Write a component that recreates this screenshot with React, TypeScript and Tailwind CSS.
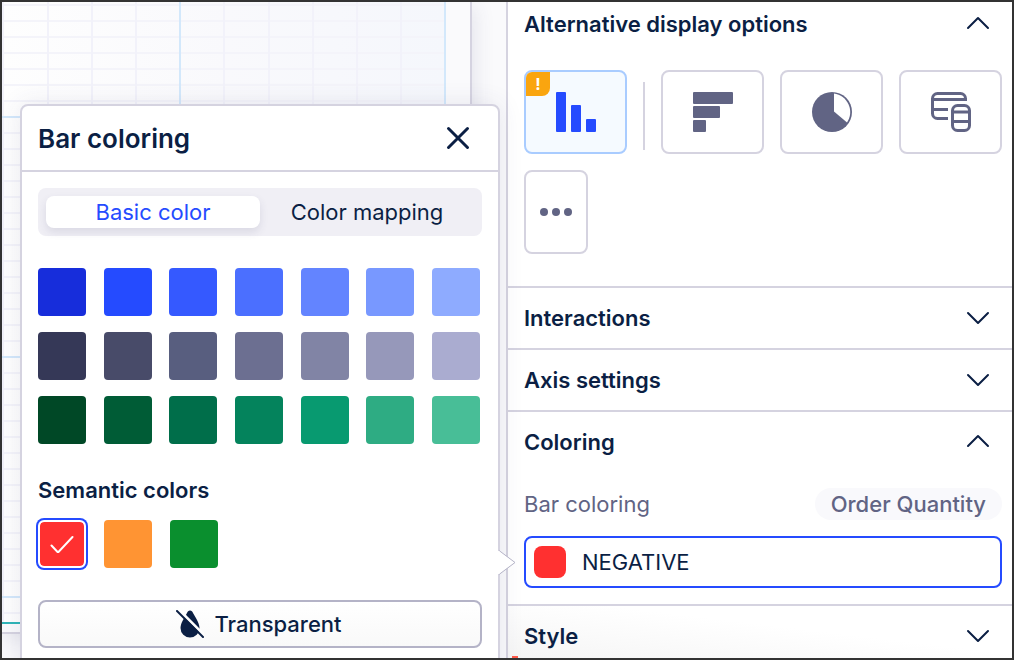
import React, { useState } from "react";

const palette = [
  ["#172ddb", "#254bff", "#3559ff", "#4b6fff", "#6384ff", "#7898ff", "#8eabff"],
  ["#353857", "#484b69", "#585e7f", "#6c6f91", "#8184a5", "#9698ba", "#aaacd0"],
  ["#004826", "#005c36", "#006e4a", "#04835c", "#089a70", "#2eac83", "#48be97"],
];

const semantic = [
  { name: "Negative", color: "#ff3030" },
  { name: "Critical", color: "#ff9433" },
  { name: "Positive", color: "#0a8f2e" },
];

const Chevron = ({ up = false }: { up?: boolean }) => (
  <svg width="24" height="24" viewBox="0 0 24 24" fill="none" stroke="#0b1f44" strokeWidth="2" strokeLinecap="round" strokeLinejoin="round">
    <path d={up ? "M2 16 12 6l10 10" : "M2 7l10 10L22 7"} />
  </svg>
);

const SectionHeader = ({ title, open = false }: { title: string; open?: boolean }) => (
  <h2>
    <button aria-expanded={open} className="flex h-[60px] w-full items-center justify-between pl-4 pr-[22px] text-[22px] font-semibold">
      {title}
      <Chevron up={open} />
    </button>
  </h2>
);

const cardClass = "flex h-[84px] items-center justify-center rounded-lg border-2";

const ChartOptions = () => (
  <div className="flex flex-wrap gap-4 pl-4 pr-2.5 pt-6 pb-8">
    <button aria-label="Bar chart" className={`${cardClass} relative min-w-[103px] flex-1 border-[#a9ccff] bg-[#f5faff]`}>
      <span className="absolute left-0 top-0 flex size-6 items-center justify-center rounded-br-lg rounded-tl-md bg-[#faa50f] text-base font-bold text-white">
        !
      </span>
      <svg width="40" height="40" viewBox="0 0 40 40" fill="#254bff">
        <rect width="10" height="40" rx="1" />
        <rect x="15" y="13" width="10" height="27" rx="1" />
        <rect x="30" y="27" width="10" height="13" rx="1" />
      </svg>
    </button>
    <div className="mb-1 mt-3 w-0.5 bg-[#d5d3e0]" />
    <button aria-label="Horizontal bar chart" className={`${cardClass} min-w-[103px] flex-1 border-[#d5d3e0]`}>
      <svg width="40" height="40" viewBox="0 0 40 40" fill="#616484">
        <rect width="40" height="12" rx="1" />
        <rect y="14" width="27" height="12" rx="1" />
        <rect y="28" width="13" height="12" rx="1" />
      </svg>
    </button>
    <button aria-label="Pie chart" className={`${cardClass} min-w-[103px] flex-1 border-[#d5d3e0]`}>
      <svg width="40" height="40" viewBox="0 0 40 40">
        <circle cx="20" cy="20" r="20" fill="#616484" />
        <path d="M22 1.6A18.6 18.6 0 0 1 35 30.5L22 19.4Z" fill="#fff" />
      </svg>
    </button>
    <button aria-label="Tables" className={`${cardClass} min-w-[103px] flex-1 border-[#d5d3e0]`}>
      <svg width="40" height="40" viewBox="0 0 40 40" fill="none" stroke="#616484" strokeWidth="3">
        <path d="M17 26.5H6.5a5 5 0 0 1-5-5v-15a5 5 0 0 1 5-5h23a5 5 0 0 1 5 5v1H1.5M1.5 17.5H17" />
        <rect x="21.5" y="13.5" width="17" height="25" rx="5" />
        <path d="M21.5 20h17M21.5 29.5h17" />
      </svg>
    </button>
    <button aria-label="More charts" className={`${cardClass} w-16 border-[#d5d3e0]`}>
      <svg width="32" height="8" viewBox="0 0 32 8" fill="#616484">
        <circle cx="4" cy="4" r="4" />
        <circle cx="16" cy="4" r="4" />
        <circle cx="28" cy="4" r="4" />
      </svg>
    </button>
  </div>
);

const SettingsPanel = () => (
  <aside className="w-[506px] shrink-0 border-l-2 border-[#d5d3e0] bg-white">
    <h2>
      <button aria-expanded="true" className="flex h-11 w-full items-center justify-between pl-4 pr-[22px] text-[22px] font-semibold">
        Alternative display options
        <Chevron up />
      </button>
    </h2>
    <ChartOptions />
    <section className="border-t-2 border-[#d5d3e0]">
      <SectionHeader title="Interactions" />
    </section>
    <section className="border-t-2 border-[#d5d3e0]">
      <SectionHeader title="Axis settings" />
    </section>
    <section className="border-t-2 border-[#d5d3e0]">
      <SectionHeader title="Coloring" open />
      <div className="pl-4 pr-2.5 py-4">
        <div className="mb-4 flex h-8 items-center justify-between text-[#616484]">
          <span id="bar-coloring">Bar coloring</span>
          <span className="flex h-8 items-center rounded-full bg-[#f9f9fc] px-4 font-medium">Order Quantity</span>
        </div>
        <button aria-labelledby="bar-coloring" className="flex h-[52px] w-full items-center gap-4 rounded-lg border-2 border-[#254bff] px-2">
          <span className="size-8 rounded-lg bg-[#ff3030]" />
          NEGATIVE
        </button>
      </div>
    </section>
    <section className="border-t-2 border-[#d5d3e0] bg-linear-to-tr from-[#f4f4f4] to-white to-60%">
      <SectionHeader title="Style" />
    </section>
  </aside>
);

const CanvasGrid = () => (
  <svg className="size-full" aria-hidden="true">
    <defs>
      <linearGradient id="sheet">
        <stop offset="0" stopColor="#fefefe" />
        <stop offset="0.5" stopColor="#f9f9fc" />
        <stop offset="1" stopColor="#f5f7fc" />
      </linearGradient>
      <pattern id="rows" width="444" height="16" y="2" patternUnits="userSpaceOnUse">
        <path d="M0 1H444" stroke="#f4f4fa" strokeWidth="2" />
      </pattern>
    </defs>
    <rect width="444" height="620" fill="url(#sheet)" />
    <rect width="444" height="620" fill="url(#rows)" />
    <path d="M1 0V620M46 0V620M90 0V620M134 0V620M222 0V620M267 0V620M311 0V620M355 0V620M399 0V620" stroke="#f2f2fa" strokeWidth="2" />
    <path d="M178 0V620M443 0V620M0 115H443M0 355H443M0 595H443" stroke="#d3e8fb" strokeWidth="2" />
    <path d="M0 621H468" stroke="#2fb5b8" strokeWidth="2" />
  </svg>
);

const ColoringPopover = () => {
  const [tab, setTab] = useState("Basic color");

  return (
    <div role="dialog" aria-labelledby="popover-title" className="absolute right-1.5 top-[102px] w-[480px] rounded-lg border-2 border-[#d5d3e0] bg-white shadow-[0_0_24px_rgba(60,60,110,0.1)]">
      <div className="flex h-[66px] items-center justify-between border-b-2 border-[#d5d3e0] pl-4 pr-7">
        <h1 id="popover-title" className="text-[26px] font-semibold">Bar coloring</h1>
        <button aria-label="Close">
          <svg width="24" height="24" viewBox="0 0 24 24" fill="none" stroke="#0b1f44" strokeWidth="3" strokeLinecap="round">
            <path d="M2.5 2.5l19 19M21.5 2.5l-19 19" />
          </svg>
        </button>
      </div>
      <div className="px-4 pb-8 pt-4">
        <div className="flex rounded-lg bg-[#f0eff5] p-2">
          {["Basic color", "Color mapping"].map((name) => (
            <button
              key={name}
              aria-pressed={tab === name}
              onClick={() => setTab(name)}
              className={`h-8 flex-1 rounded-lg ${tab === name ? "bg-white text-[#254bff] shadow-[0_4px_8px_rgba(60,60,110,0.12)]" : ""}`}
            >
              {name}
            </button>
          ))}
        </div>
        <div className="mt-8 flex flex-col gap-4 pr-0.5">
          {palette.map((row) => (
            <div key={row[0]} className="flex justify-between">
              {row.map((color) => (
                <button key={color} aria-label={color} className="size-12 rounded" style={{ backgroundColor: color }} />
              ))}
            </div>
          ))}
        </div>
        <h2 className="mt-7 flex h-12 items-start pt-0.5 text-[22px] font-semibold leading-8">Semantic colors</h2>
        <div className="flex gap-[18px]">
          {semantic.map(({ name, color }) =>
            name === "Negative" ? (
              <button key={name} aria-label={name} className="flex size-12 items-center justify-center rounded-md border-2 border-white bg-[#ff3030] bg-clip-padding ring-2 ring-[#254bff]">
                <svg width="24" height="18" viewBox="0 0 24 18" fill="none" stroke="#fff" strokeWidth="2" strokeLinecap="round">
                  <path d="M1.5 10.5l6.5 7L22.5 2" />
                </svg>
              </button>
            ) : (
              <button key={name} aria-label={name} className="size-12 rounded" style={{ backgroundColor: color }} />
            )
          )}
        </div>
        <button className="mt-8 flex h-12 w-full items-center justify-center gap-2.5 rounded-lg border-2 border-[#b4b3c7] bg-linear-to-b from-white to-[#f9f9f9] pr-0.5 font-medium">
          <svg width="28" height="28" viewBox="0 0 28 28">
            <path d="M14 .5C12.5 .5 11.5 1.5 11 3L6.5 11C5.5 13 4.5 15.5 4.5 18a9.5 9.5 0 0 0 19 0C23.5 15 22 12 20.5 9L17 3C16.5 1.5 15.5 .5 14 .5Z" fill="#0b1f44" />
            <path d="M2.5 -.5 29.5 26.5" stroke="#fff" strokeWidth="3" />
            <path d="M1 1 27 27" stroke="#0b1f44" strokeWidth="2" strokeLinecap="round" />
          </svg>
          Transparent
        </button>
      </div>
      {/* Pointer towards the field being edited */}
      <svg className="absolute -right-[19px] top-[444px]" width="20" height="26" viewBox="0 0 20 26">
        <path d="M2 .5 18 12.5 2 24.5" fill="#fff" stroke="#b4b3c7" />
        <path d="M1 1V24" stroke="#fff" strokeWidth="3" />
      </svg>
    </div>
  );
};

export default function App() {
  return (
    <div className="relative flex h-screen overflow-hidden border-2 border-[#333] bg-white font-['Inter','Liberation_Sans',sans-serif] text-[22px] text-[#0b1f44]">
      <main className="relative z-10 min-w-0 flex-1 bg-[#fafafc] pb-6 pr-[34px]">
        <div className="h-full overflow-hidden border-b-2 border-r-2 border-[#d5d3e0] bg-[#fafafc] shadow-[2px_4px_20px_rgba(60,60,110,0.12)]">
          <CanvasGrid />
        </div>
        <ColoringPopover />
        <span className="absolute -right-3 bottom-0 h-0.5 w-1.5 bg-[#ff5a4a]" />
      </main>
      <SettingsPanel />
    </div>
  );
}
